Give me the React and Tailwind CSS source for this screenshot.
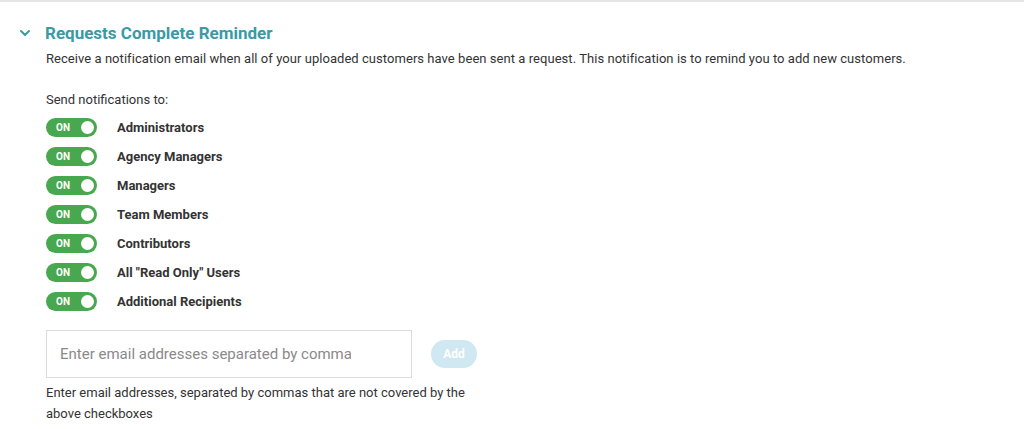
import React from 'react';

const recipients = [
  'Administrators',
  'Agency Managers',
  'Managers',
  'Team Members',
  'Contributors',
  'All "Read Only" Users',
  'Additional Recipients',
];

function Toggle() {
  return (
    <div className="flex h-[19px] w-[51px] items-center justify-between rounded-full bg-[#48a84f] pl-[10px] pr-[3px]">
      <span className="text-[10px] font-bold leading-none text-white">ON</span>
      <span className="h-[13px] w-[13px] rounded-full bg-white" />
    </div>
  );
}

export default function App() {
  return (
    <div
      className="h-[429px] w-[1024px] overflow-hidden border-t-2 border-[#e6e6e6] bg-white text-[#333]"
      style={{ fontFamily: 'Roboto, "Liberation Sans", sans-serif' }}
    >
      <div className="flex items-center pl-[19px] pt-[20px]">
        <svg
          className="h-[12px] w-[12px] text-[#3a9aa6]"
          viewBox="0 0 12 12"
          fill="none"
          stroke="currentColor"
          strokeWidth="2"
          strokeLinecap="round"
          strokeLinejoin="round"
        >
          <path d="M2 4l4 4 4-4" />
        </svg>
        <h2 className="ml-[14px] text-[17px] font-bold leading-[22px] text-[#3a9aa6]">
          Requests Complete Reminder
        </h2>
      </div>

      <div className="pl-[46px]">
        <p className="mt-[5px] text-[13px] leading-[20px] tracking-[0.05px]">
          Receive a notification email when all of your uploaded customers have been sent a request. This notification is to remind you to add new customers.
        </p>

        <p className="mt-[21px] text-[13px] leading-[20px]">Send notifications to:</p>

        <div className="mt-[8px] flex flex-col gap-[10px]">
          {recipients.map((r) => (
            <div key={r} className="flex items-center">
              <Toggle />
              <span className="ml-[20px] text-[13px] font-bold leading-[19px] text-[#333]">{r}</span>
            </div>
          ))}
        </div>

        <div className="mt-[19px] flex items-center">
          <div className="flex h-[48px] w-[366px] items-center border border-[#dcdcdc] pl-[13px] pr-[60px]">
            <span className="min-w-0 overflow-hidden whitespace-nowrap text-[15px] text-[#8a8a8a]">
              Enter email addresses separated by commas
            </span>
          </div>
          <button className="ml-[19px] h-[28px] w-[46px] rounded-full bg-[#cfe8f1] text-[12px] font-bold text-white">
            Add
          </button>
        </div>

        <p className="mt-[4px] w-[440px] text-[13px] leading-[21px]">
          Enter email addresses, separated by commas that are not covered by the above checkboxes
        </p>
      </div>
    </div>
  );
}
